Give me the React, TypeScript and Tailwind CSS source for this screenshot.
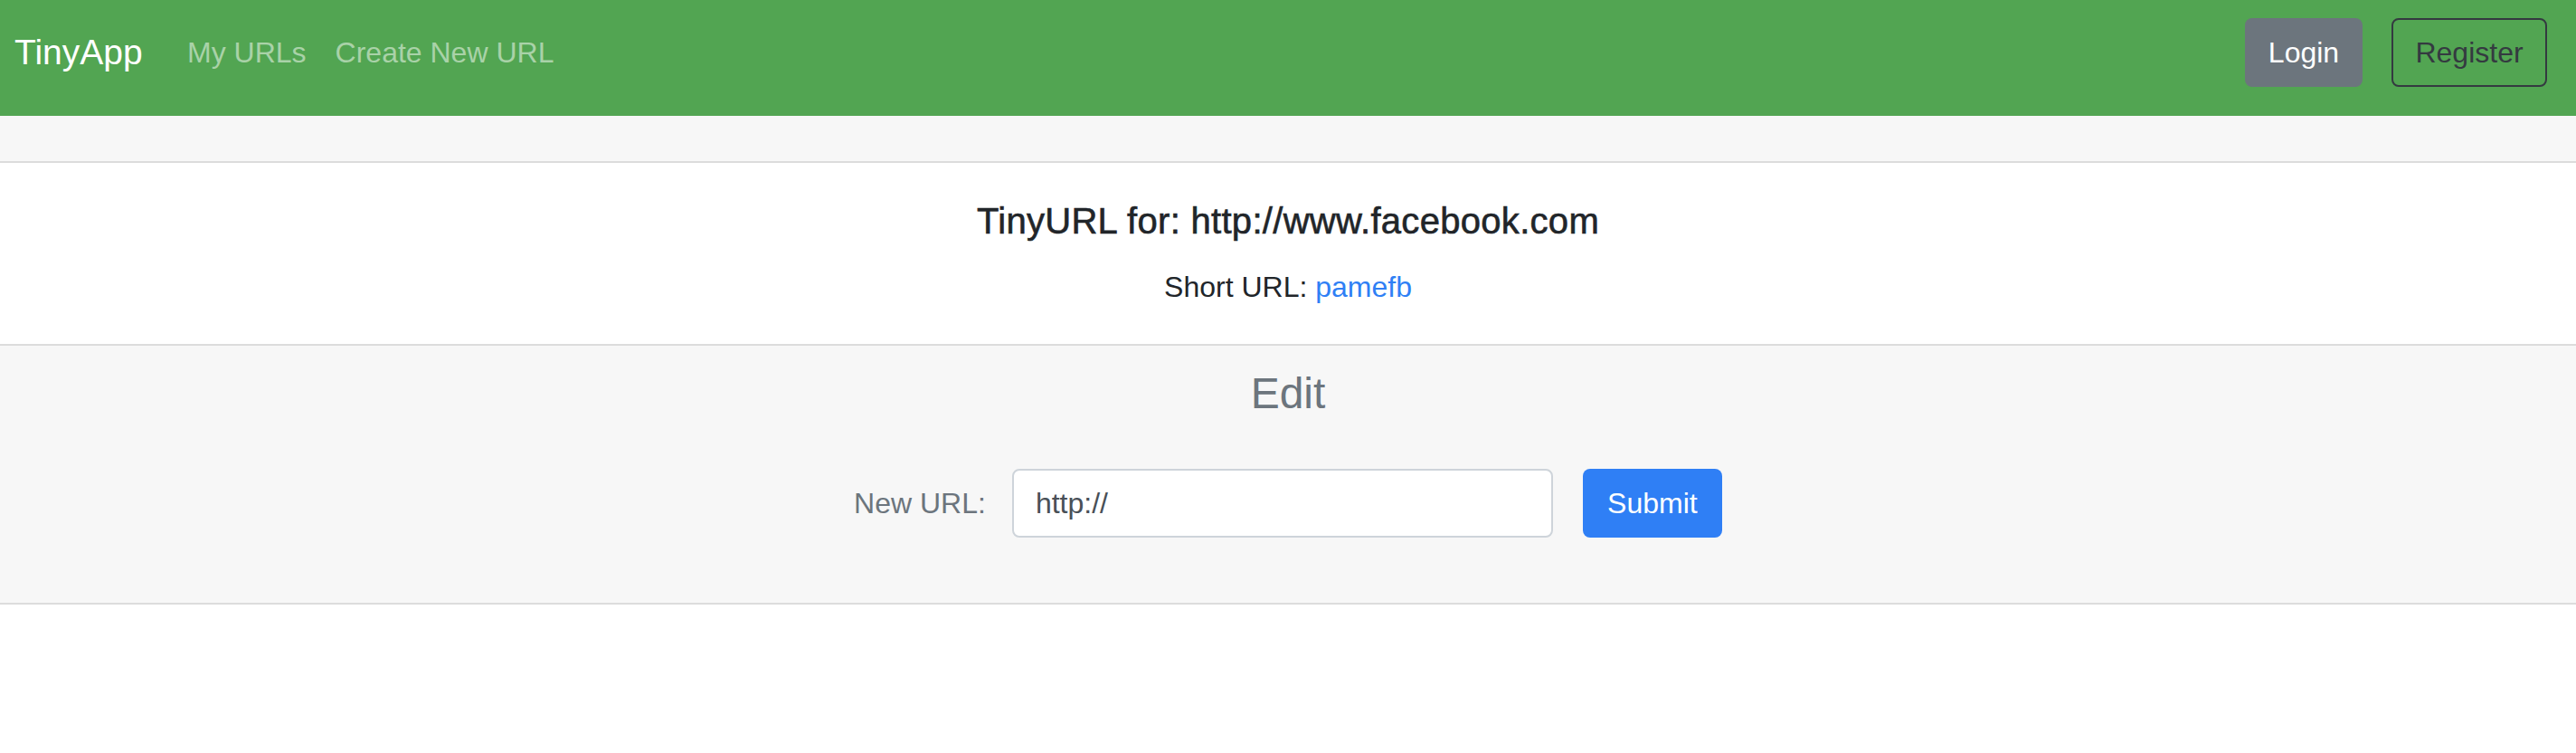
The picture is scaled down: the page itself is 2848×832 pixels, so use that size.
import React from "react";

export default function App() {
  const font = { fontFamily: '"Liberation Sans", Arial, sans-serif' };
  return (
    <div className="min-h-[832px] bg-white" style={font}>
      <nav className="h-[128px] bg-[#52a552] pt-[20px] pl-[16px] pr-[32px]">
        <div className="flex h-[76px] items-center justify-between">
          <div className="flex items-center">
            <a className="w-[175px] text-[39px] leading-[48px] text-white">TinyApp</a>
            <a className="px-[16px] text-[32px] leading-[48px] text-[#a9d2a8]">My URLs</a>
            <a className="px-[16px] text-[32px] leading-[48px] text-[#a9d2a8]">Create New URL</a>
          </div>
          <div className="flex items-center gap-[32px]">
            <button className="flex h-[76px] w-[130px] items-center justify-center rounded-[8px] bg-[#6c757d] text-[32px] text-white">
              Login
            </button>
            <button className="flex h-[76px] w-[172px] items-center justify-center rounded-[8px] border-2 border-[#343a40] text-[32px] text-[#343a40]">
              Register
            </button>
          </div>
        </div>
      </nav>
      <div className="h-[52px] border-b-2 border-[#dcdcdc] bg-[#f7f7f7]" />
      <section className="flex flex-col items-center border-b-2 border-[#dcdcdc] bg-white pt-[40px] pb-[39px]">
        <h5 className="text-[40px] font-medium leading-[48px] tracking-[0.3px] text-[#212529] [-webkit-text-stroke:0.6px_#212529]">
          TinyURL for: http://www.facebook.com
        </h5>
        <p className="mt-[25px] text-[32px] leading-[48px] text-[#212529]">
          Short URL: <a className="text-[#2f7ff5]">pamefb</a>
        </p>
      </section>
      <section className="flex flex-col items-center border-b-2 border-[#dcdcdc] bg-[#f7f7f7] pt-[24px] pb-[72px]">
        <h3 className="text-[48px] leading-[58px] text-[#6c757d]">Edit</h3>
        <form className="mt-[54px] flex items-center">
          <label className="text-[32px] leading-[48px] text-[#6c757d]">New URL:</label>
          <input
            readOnly
            defaultValue="http://"
            className="ml-[29px] h-[76px] w-[598px] rounded-[8px] border-2 border-[#ced4da] bg-white px-[24px] text-[32px] text-[#495057] outline-none"
            style={font}
          />
          <button
            type="button"
            className="ml-[33px] flex h-[76px] w-[154px] items-center justify-center rounded-[8px] bg-[#2f7ff5] text-[32px] text-white"
          >
            Submit
          </button>
        </form>
      </section>
    </div>
  );
}
